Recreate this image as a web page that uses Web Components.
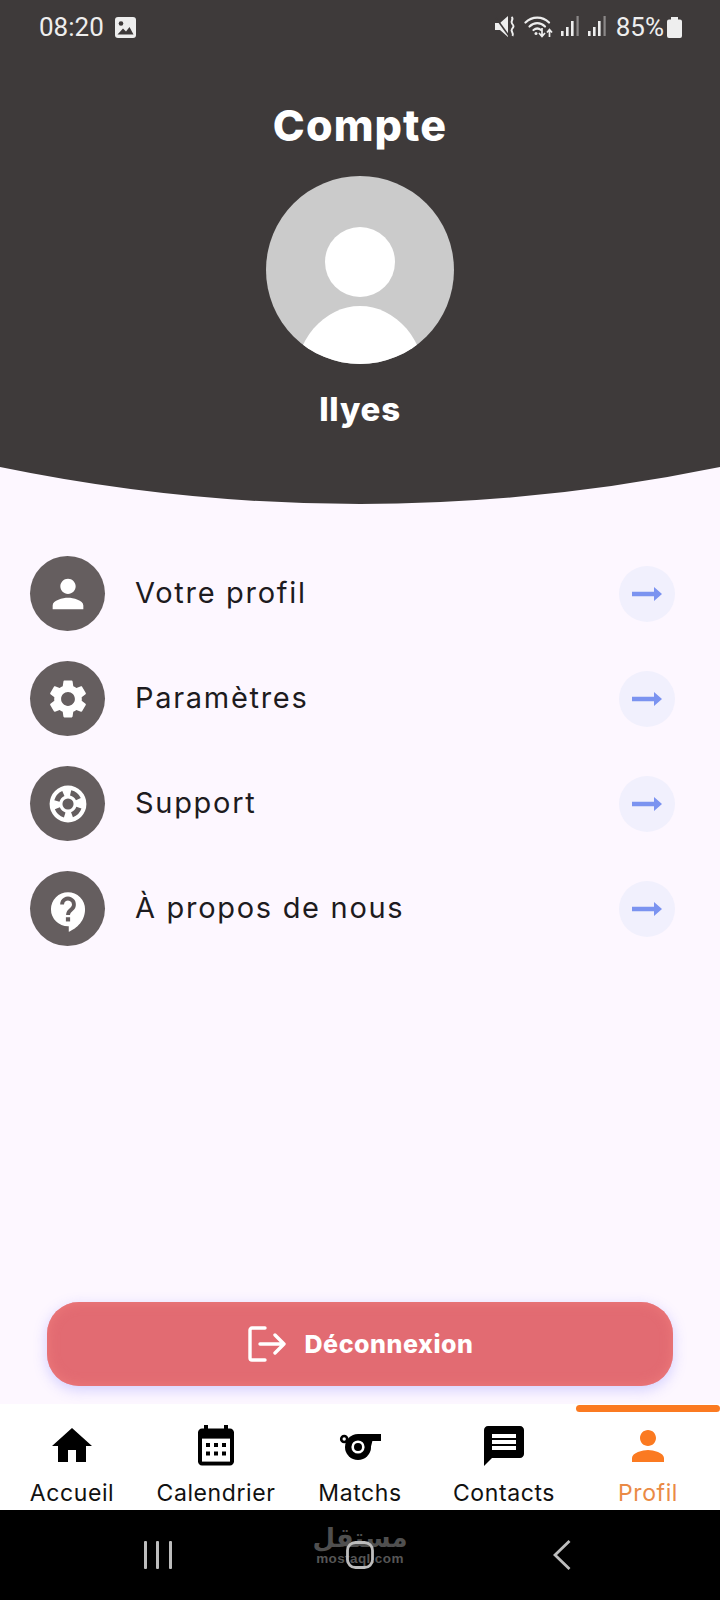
<!DOCTYPE html>
<html lang="fr">
<head>
<meta charset="utf-8">
<title>Compte</title>
<style>
html,body{margin:0;padding:0;background:#fdf7ff;}
body{width:720px;height:1600px;overflow:hidden;font-family:"Inter","Noto Sans",sans-serif;}
</style>
</head>
<body>
<account-app>
  <profile-header slot="header" title="Compte" name="Ilyes"></profile-header>
  <menu-row slot="menu" label="Votre profil" icon="person"></menu-row>
  <menu-row slot="menu" label="Paramètres" icon="gear"></menu-row>
  <menu-row slot="menu" label="Support" icon="support"></menu-row>
  <menu-row slot="menu" label="À propos de nous" icon="help"></menu-row>
  <logout-button slot="action">Déconnexion</logout-button>
  <bottom-nav slot="nav">
    <tab-item label="Accueil" icon="home"></tab-item>
    <tab-item label="Calendrier" icon="calendar"></tab-item>
    <tab-item label="Matchs" icon="whistle"></tab-item>
    <tab-item label="Contacts" icon="message"></tab-item>
    <tab-item label="Profil" icon="person" active></tab-item>
  </bottom-nav>
  <system-nav slot="system"></system-nav>
</account-app>
<script>
const ICONS = {
  person:'<path d="M12 12c2.21 0 4-1.79 4-4s-1.79-4-4-4-4 1.79-4 4 1.79 4 4 4zm0 2c-2.67 0-8 1.34-8 4v2h16v-2c0-2.66-5.33-4-8-4z"/>',
  gear:'<path d="M19.14 12.94c.04-.3.06-.61.06-.94 0-.32-.02-.64-.07-.94l2.03-1.58c.18-.14.23-.41.12-.61l-1.92-3.32c-.12-.22-.37-.29-.59-.22l-2.39.96c-.5-.38-1.03-.7-1.62-.94l-.36-2.54c-.04-.24-.24-.41-.48-.41h-3.84c-.24 0-.43.17-.47.41l-.36 2.54c-.59.24-1.13.57-1.62.94l-2.39-.96c-.22-.08-.47 0-.59.22L2.74 8.87c-.12.21-.08.47.12.61l2.03 1.58c-.05.3-.09.63-.09.94s.02.64.07.94l-2.03 1.58c-.18.14-.23.41-.12.61l1.92 3.32c.12.22.37.29.59.22l2.39-.96c.5.38 1.03.7 1.62.94l.36 2.54c.05.24.24.41.48.41h3.84c.24 0 .44-.17.47-.41l.36-2.54c.59-.24 1.13-.56 1.62-.94l2.39.96c.22.08.47 0 .59-.22l1.92-3.32c.12-.22.07-.47-.12-.61l-2.01-1.58zM12 15.6c-1.98 0-3.6-1.62-3.6-3.6s1.62-3.6 3.6-3.6 3.6 1.62 3.6 3.6-1.62 3.6-3.6 3.6z"/>',
  support:'<circle cx="12" cy="12" r="9.6"/><circle cx="12" cy="12" r="2.9" fill="#655e5f"/><circle cx="12" cy="12" r="6" fill="none" stroke="#655e5f" stroke-width="2.8" pathLength="360" stroke-dasharray="52 38" stroke-dashoffset="-19"/>',
  help:'<path d="M12 3.200a8.900 8.900 0 0 0 0 17.800h.4v2.900c2.700-1.200 8.500-4.600 8.500-11.800A8.900 8.900 0 0 0 12 3.200z"/><path d="M8.900 9.700a3.100 3.100 0 1 1 4.900 2.500c-1.200.9-1.800 1.400-1.800 2.900" fill="none" stroke="#655e5f" stroke-width="2"/><rect x="10.900" y="16.300" width="2.200" height="2.200" fill="#655e5f"/>',
  home:'<path d="M10 20v-6h4v6h5v-8h3L12 3 2 12h3v8z"/>',
  calendar:'<path d="M8 1.500v1.700h8V1.500h2v1.700h1c1.100 0 2 .9 2 2v14.600c0 1.100-.9 2-2 2H5c-1.100 0-2-.9-2-2V5.200c0-1.100.9-2 2-2h1V1.500z"/><path fill="#fff" d="M5 8.300h14v11.500H5z"/><path d="M7 10.500h2v2H7zm4 0h2v2h-2zm4 0h2v2h-2zM7 14.800h2v2H7zm4 0h2v2h-2zm4 0h2v2h-2z"/>',
  whistle:'<circle cx="11" cy="12.500" r="6.500"/><path d="M11 6h11.500v3.500H18.200L16.800 15 11 12z"/><circle cx="11" cy="12.500" r="3.300" fill="#fff"/><circle cx="11" cy="12.500" r="2"/><circle cx="4.100" cy="8.500" r="1.500" fill="none" stroke="#000" stroke-width="1.300"/>',
  message:'<path d="M20 2H4c-1.100 0-1.990.9-1.990 2L2 22l4-4h14c1.100 0 2-.9 2-2V4c0-1.100-.9-2-2-2zm-2 12H6v-2h12v2zm0-3H6V9h12v2zm0-3H6V6h12v2z"/>'
};

class Base extends HTMLElement {
  render(html){ (this.shadowRoot || this.attachShadow({mode:'open'})).innerHTML = html; }
}

customElements.define('account-app', class extends Base {
  connectedCallback(){ this.render(`<style>
    :host{display:flex;flex-direction:column;width:720px;height:1600px;background:#fdf7ff;}
    .menu{display:flex;flex-direction:column;gap:30px;padding:52px 45px 0 30px;flex:1;}
    .action{padding:0 47px 18px;}
  </style>
  <slot name="header"></slot>
  <div class="menu"><slot name="menu"></slot></div>
  <div class="action"><slot name="action"></slot></div>
  <slot name="nav"></slot>
  <slot name="system"></slot>`); }
});

customElements.define('status-bar', class extends Base {
  connectedCallback(){
    const bars = `<svg width="19" height="22" viewBox="0 0 19 22"><g fill="#eee"><rect x="0" y="15" width="2.600" height="5"/><rect x="5" y="11" width="2.600" height="9"/><rect x="10" y="5" width="2.600" height="15"/></g><rect x="15.500" y="0" width="2.200" height="20" fill="#8b8888"/></svg>`;
    this.render(`<style>
    :host{display:flex;align-items:center;height:50px;padding:4px 38px 0 39px;box-sizing:border-box;color:#eee;font:400 26px/1 Roboto,sans-serif;}
    svg{display:block;flex:none;}
    .time{margin-right:11px;}
    .gap{flex:1;}
    .pct{margin:0 3px 0 9px;}
  </style>
  <span class="time">08:20</span>
  <svg width="21" height="21" viewBox="0 0 21 21"><rect width="21" height="21" rx="3" fill="#eee"/><circle cx="6" cy="6.500" r="2.300" fill="#3e3a3a"/><path d="M2.500 17.500 8 11.500l3 3 3.500-4.500 4 7.500z" fill="#3e3a3a"/></svg>
  <span class="gap"></span>
  <svg width="22" height="22" viewBox="0 0 22 22" style="margin-right:7px"><path d="M0 7h5l8-7v21l-8-7H0z" fill="#eee"/><path d="M1 2l13 18" stroke="#3e3a3a" stroke-width="1.600"/><path d="M16.500 1c3 2-1.500 4 .5 6.500s2 3 0 5.500 2.500 4 .5 7" fill="none" stroke="#eee" stroke-width="2"/></svg>
  <svg width="30" height="24" viewBox="0 0 30 24" style="margin-right:7px"><g fill="none" stroke="#eee" stroke-width="2.200" stroke-linecap="round"><path d="M1.500 7.500c6.500-6.500 17-6.500 23.500 0"/><path d="M5.500 11.500c4.500-4.500 11-4.500 15.500 0"/><path d="M9.500 15c2.500-2 5-2 7.500 0"/></g><circle cx="12" cy="18.500" r="1.500" fill="#eee"/><path d="M18 13v8m-3-3 3 3.500 3-3.500" fill="none" stroke="#eee" stroke-width="1.700"/><path d="M25.500 22v-7m-2.500 2.500 2.500-3 2.500 3" fill="none" stroke="#eee" stroke-width="1.700"/></svg>
  ${bars.replace('<svg','<svg style="margin-right:8px"')}${bars}
  <span class="pct">85%</span>
  <svg width="15" height="21" viewBox="0 0 15 21"><path d="M4 0h7v2.500h2a2 2 0 0 1 2 2V19a2 2 0 0 1-2 2H2a2 2 0 0 1-2-2V4.500a2 2 0 0 1 2-2h2z" fill="#eee"/></svg>`); }
});

customElements.define('profile-header', class extends Base {
  connectedCallback(){ this.render(`<style>
    :host{display:block;height:504px;background:#3e3a3a;color:#fff;clip-path:path("M0 0H720V467Q360 541 0 467Z");}
    .wrap{display:flex;flex-direction:column;align-items:center;}
    h1{margin:49px 0 0;font:800 43px/52px Inter,sans-serif;letter-spacing:1.100px;}
    svg{display:block;margin-top:25px;}
    .name{margin-top:24px;font:800 33px/42px Inter,sans-serif;letter-spacing:.8px;}
  </style>
  <status-bar></status-bar>
  <div class="wrap">
    <h1>${this.getAttribute('title')}</h1>
    <svg width="188" height="188" viewBox="0 0 188 188"><defs><clipPath id="c"><circle cx="94" cy="94" r="94"/></clipPath></defs><circle cx="94" cy="94" r="94" fill="#cbcbcb"/><circle cx="94" cy="86" r="35" fill="#fff"/><ellipse cx="94" cy="208" rx="66" ry="78" fill="#fff" clip-path="url(#c)"/></svg>
    <div class="name">${this.getAttribute('name')}</div>
  </div>`); }
});

customElements.define('menu-row', class extends Base {
  connectedCallback(){ this.render(`<style>
    :host{display:flex;align-items:center;height:75px;color:#1d1b20;}
    .ic{width:75px;height:75px;border-radius:50%;background:#655e5f;display:flex;align-items:center;justify-content:center;flex:none;}
    .ic svg{display:block;width:46px;height:46px;fill:#fff;}
    .t{flex:1;margin-left:30px;font:400 29px/36px Inter,sans-serif;letter-spacing:1.700px;padding-bottom:2px;}
    .go{width:56px;height:56px;border-radius:50%;background:#f1f0fd;display:flex;align-items:center;justify-content:center;flex:none;}
  </style>
  <div class="ic"><svg viewBox="0 0 24 24">${ICONS[this.getAttribute('icon')]}</svg></div>
  <div class="t">${this.getAttribute('label')}</div>
  <div class="go"><svg width="32" height="16" viewBox="0 0 32 16"><path d="M1 5.700h22V1l8 7-8 7v-4.700H1z" fill="#7b93f0"/></svg></div>`); }
});

customElements.define('logout-button', class extends Base {
  connectedCallback(){ this.render(`<style>
    :host{display:flex;align-items:center;justify-content:center;gap:18px;height:84px;border-radius:32px;background:#e26b72;color:#fff;box-shadow:inset 0 0 12px #ee7b7b,0 4px 14px rgba(120,120,255,.32);padding-left:2px;box-sizing:border-box;}
    svg{display:block;flex:none;}
    span{font:800 25px/32px Inter,sans-serif;letter-spacing:.55px;}
  </style>
  <svg width="38" height="36" viewBox="0 0 38 36" fill="none" stroke="#fff" stroke-width="3.400" stroke-linecap="round" stroke-linejoin="round"><path d="M17 2H4a2 2 0 0 0-2 2v28a2 2 0 0 0 2 2h13"/><path d="M12 18h24M27 9l9 9-9 9"/></svg>
  <span><slot></slot></span>`); }
});

customElements.define('bottom-nav', class extends Base {
  connectedCallback(){ this.render(`<style>
    :host{display:grid;grid-template-columns:repeat(5,1fr);height:106px;background:#fff;}
  </style><slot></slot>`); }
});

customElements.define('tab-item', class extends Base {
  connectedCallback(){ const on=this.hasAttribute('active'); this.render(`<style>
    :host{display:flex;flex-direction:column;align-items:center;position:relative;padding-top:18px;color:${on?'#ea8a45':'#111'};}
    svg{display:block;width:48px;height:48px;fill:${on?'#fb7a21':'#000'};}
    .l{margin-top:7px;font:400 23px/32px Inter,sans-serif;letter-spacing:.6px;white-space:nowrap;}
    .bar{position:absolute;top:1px;left:0;right:0;height:7px;border-radius:4px;background:#fb7a21;}
  </style>
  ${on?'<div class="bar"></div>':''}
  <svg viewBox="0 0 24 24">${ICONS[this.getAttribute('icon')]}</svg>
  <div class="l">${this.getAttribute('label')}</div>`); }
});

customElements.define('system-nav', class extends Base {
  connectedCallback(){ this.render(`<style>
    :host{display:block;height:90px;background:#000;}
    .row{display:grid;grid-template-columns:repeat(3,202px);justify-content:center;padding-top:30px;align-items:center;}
    .cell{display:flex;justify-content:center;position:relative;}
    svg{display:block;position:relative;}
    .mark{position:absolute;left:50%;top:-18px;transform:translateX(-50%);display:flex;flex-direction:column;align-items:center;color:#4f4f4f;white-space:nowrap;}
    .ar{font:700 26px/30px "DejaVu Sans",sans-serif;}
    .en{font:700 13.500px/13px "Liberation Sans",sans-serif;letter-spacing:.4px;color:#565656;margin-top:-1px;}
  </style>
  <div class="row">
    <div class="cell"><svg width="28" height="28" viewBox="0 0 28 28" fill="#bdbdbd"><rect x="0" y="0" width="3" height="28" rx="1"/><rect x="12" y="0" width="3" height="28" rx="1"/><rect x="25" y="0" width="3" height="28" rx="1"/></svg></div>
    <div class="cell"><div class="mark"><span class="ar" dir="rtl">مستقل</span><span class="en">mostaql.com</span></div><svg width="28" height="28" viewBox="0 0 28 28"><rect x="1.500" y="1.500" width="25" height="25" rx="8" fill="none" stroke="#bdbdbd" stroke-width="2.800"/></svg></div>
    <div class="cell"><svg width="18" height="30" viewBox="0 0 18 30"><path d="M16.500 1 2 15l14.500 14" fill="none" stroke="#bdbdbd" stroke-width="2.800"/></svg></div>
  </div>`); }
});
</script>
</body>
</html>
